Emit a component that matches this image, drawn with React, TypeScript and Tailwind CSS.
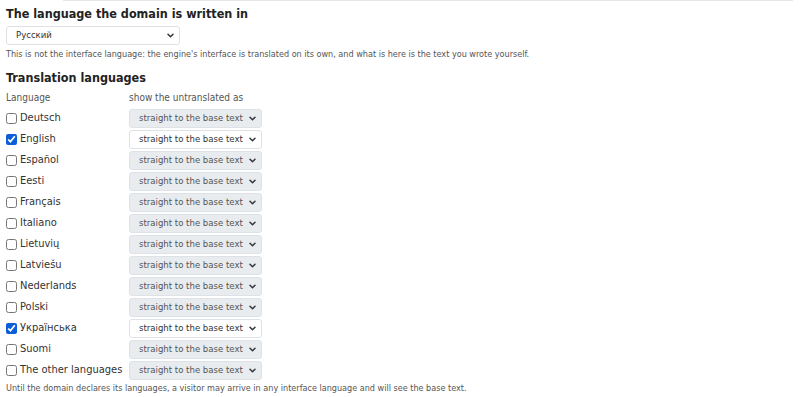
import React, { useState } from 'react'

const font = { fontFamily: '"DejaVu Sans Condensed", "DejaVu Sans", sans-serif' }

const langs = [
  { name: 'Deutsch', on: false },
  { name: 'English', on: true },
  { name: 'Español', on: false },
  { name: 'Eesti', on: false },
  { name: 'Français', on: false },
  { name: 'Italiano', on: false },
  { name: 'Lietuvių', on: false },
  { name: 'Latviešu', on: false },
  { name: 'Nederlands', on: false },
  { name: 'Polski', on: false },
  { name: 'Українська', on: true },
  { name: 'Suomi', on: false },
  { name: 'The other languages', on: false },
]

function Chevron() {
  return (
    <svg width="7" height="5" viewBox="0 0 7 5" className="shrink-0">
      <path d="M1 1.2 L3.5 3.8 L6 1.2" fill="none" stroke="#343a40" strokeWidth="1.5" strokeLinecap="round" strokeLinejoin="round" />
    </svg>
  )
}

function FakeSelect({ text, disabled, width }: { text: string; disabled?: boolean; width: string }) {
  return (
    <div
      className={
        'flex items-center justify-between h-[19px] rounded-[3px] border pl-[9px] pr-[5px] text-[9.5px] ' +
        width +
        (disabled ? ' bg-[#e9ecef] border-[#dee2e6] text-[#555]' : ' bg-white border-[#dee2e6] text-[#333]')
      }
    >
      <span>{text}</span>
      <Chevron />
    </div>
  )
}

export default function App() {
  const [rows, setRows] = useState(langs)

  function toggle(i: number) {
    setRows(rows.map((r, j) => (j === i ? { ...r, on: !r.on } : r)))
  }

  return (
    <div className="w-[800px] h-[397px] bg-white overflow-hidden" style={font}>
      <div className="ml-[63px] w-[730px] h-px bg-[#e5e7eb]" />
      <div className="px-[6px]">
        <h2 className="mt-[6px] text-[12.5px] font-bold text-[#222] leading-[14px]">The language the domain is written in</h2>
        <div className="mt-[5px]">
          <FakeSelect text="Русский" width="w-[174px]" />
        </div>
        <p className="mt-[3px] text-[9px] text-[#555] leading-[12px]">
          This is not the interface language: the engine's interface is translated on its own, and what is here is the text you wrote yourself.
        </p>

        <h2 className="mt-[11px] text-[12.5px] font-bold text-[#222] leading-[14px]">Translation languages</h2>
        <div className="mt-[6px] flex text-[10px] text-[#555] leading-[14px]">
          <div className="w-[123px]">Language</div>
          <div>show the untranslated as</div>
        </div>
        <div className="mt-[4px] flex flex-col gap-[2px]">
          {rows.map((r, i) => (
            <div key={r.name} className="flex items-center h-[19px]">
              <label className="w-[123px] flex items-center gap-[3px] text-[11px] text-[#333] cursor-pointer">
                <input
                  type="checkbox"
                  checked={r.on}
                  onChange={() => toggle(i)}
                  className="w-[11px] h-[11px] m-0 accent-[#0b5ed7]"
                />
                <span>{r.name}</span>
              </label>
              <FakeSelect text="straight to the base text" disabled={!r.on} width="w-[133px]" />
            </div>
          ))}
        </div>
        <p className="mt-[2px] text-[9px] text-[#555] leading-[12px]">
          Until the domain declares its languages, a visitor may arrive in any interface language and will see the base text.
        </p>
      </div>
    </div>
  )
}
